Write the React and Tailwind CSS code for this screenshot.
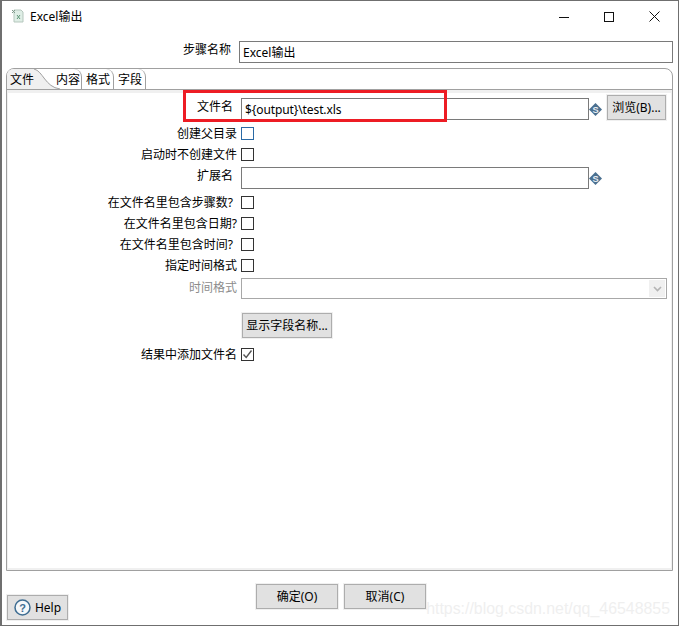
import React from "react";

const DollarIcon = () => (
  <svg width="13" height="13" viewBox="0 0 14 14" className="shrink-0">
    <polygon points="7,0 14,7 7,14 0,7" fill="#4b7090" />
    <text x="7" y="10.5" textAnchor="middle" fontSize="10" fontWeight="700" fill="#e8eef3" fontFamily="Liberation Sans, sans-serif">S</text>
  </svg>
);

const CheckBox = ({ checked, blue }) => (
  <div className={`w-[13px] h-[13px] border bg-white flex items-center justify-center ${blue ? "border-[#2a6aa5]" : "border-[#333333]"}`}>
    {checked && (
      <svg width="11" height="11" viewBox="0 0 11 11" fill="none" stroke="#555555" strokeWidth="1.4">
        <path d="M1.5 5.5 L4.2 8.5 L9.5 1.5" />
      </svg>
    )}
  </div>
);

const Button = ({ children, className = "" }) => (
  <button className={`bg-[#e1e1e1] border border-[#adadad] outline outline-1 outline-[#f0f0f0] text-[12px] text-black flex items-center justify-center whitespace-nowrap ${className}`}>
    {children}
  </button>
);

const Row = ({ label, pr = "pr-[4px]", gray, up = "", className = "", children }) => (
  <div className={`flex items-center ${className}`}>
    <div className={`w-[231px] shrink-0 text-right ${pr} ${up} ${gray ? "text-[#8c8c8c]" : "text-black"}`}>{label}</div>
    {children}
  </div>
);

const Tab = ({ children, className = "" }) => (
  <div className={`h-[20px] pt-[1px] flex items-center border-r border-[#a0a0a0] rounded-tr-[8px] whitespace-nowrap relative ${className}`}>
    {children}
  </div>
);

export default function App() {
  return (
    <div className="w-[679px] h-[627px] bg-white overflow-hidden relative text-[12px] text-black [font-family:'Noto_Sans','Noto_Sans_CJK_SC',sans-serif]">
      <div className="w-[679px] h-[626px] border border-[#6f6f6f] border-l-2 flex flex-col">
        {/* title bar */}
        <div className="h-[31px] shrink-0 flex items-center pl-[9px]">
          <svg width="14" height="14" viewBox="0 0 14 14" className="shrink-0 -mt-[1px]">
            <path d="M3 1 H10 L12 3 V13 H3 Z" fill="#dfeee6" stroke="#b5c7bd" />
            <path d="M1 1 L4 4 M4 1 L1 4" stroke="#7f9a8b" />
            <path d="M6 6 L9 10 M9 6 L6 10" stroke="#5f9678" />
          </svg>
          <span className="ml-[5px]">Excel输出</span>
          <div className="ml-auto flex items-center pr-[18px] gap-[35px]">
            <svg width="10" height="10" viewBox="0 0 10 10" className="mt-[1px]"><path d="M0 5.5 H10" stroke="#111" /></svg>
            <svg width="10" height="10" viewBox="0 0 10 10"><rect x="0.5" y="0.5" width="9" height="9" fill="none" stroke="#111" /></svg>
            <svg width="11" height="11" viewBox="0 0 11 11"><path d="M0.5 0.5 L10.5 10.5 M10.5 0.5 L0.5 10.5" stroke="#111" /></svg>
          </div>
        </div>

        {/* step name */}
        <div className="flex items-center h-[22px] mt-[9px] shrink-0">
          <div className="w-[229px] text-right -mt-[5px]">步骤名称</div>
          <div className="ml-[8px] w-[434px] h-[22px] border border-[#7a7a7a] flex items-center pl-[3px] pt-[1px]">Excel输出</div>
        </div>

        {/* tab folder */}
        <div className="ml-[4px] mt-[5px] w-[667px] h-[503px] border border-[#a0a0a0] rounded-t-[8px] flex flex-col shrink-0">
          <div className="flex h-[20px] shrink-0 relative">
            <div className="w-[49px] h-[20px] relative">
              <svg width="53" height="20" viewBox="0 0 53 20" className="absolute left-0 top-0">
                <path d="M0 20 V7 Q0 0 7 0 H27 C36 2 38 18 53 20 Z" fill="#f0f0f0" />
                <path d="M27 0 C36 2 38 18 53 20" fill="none" stroke="#a0a0a0" />
              </svg>
              <span className="absolute left-[3px] top-[2px]">文件</span>
            </div>
            <Tab className="w-[26px]">内容</Tab>
            <Tab className="w-[32px] pl-[4px]">格式</Tab>
            <Tab className="w-[32px] pl-[4px]">字段</Tab>
          </div>

          <div className="flex-1 bg-[#f0f0f0] p-[3px] pb-[2px] border-t border-[#a0a0a0] [&>div]:h-full">
            <div className="bg-white -mx-[2px] pt-[5px] pl-[2px]">
              {/* file name */}
              <Row label="文件名" pr="pr-[8px]" up="-mt-[4px]">
                <div className="w-[348px] h-[22px] pt-[1px] border border-[#7a7a7a] flex items-center pl-[3px] tracking-[-0.1px]">{"${output}\\test.xls"}</div>
                <DollarIcon />
                <Button className="ml-[5px] w-[59px] h-[25px] -mt-[3px] shrink-0">浏览(B)...</Button>
              </Row>
              <Row label="创建父目录" className="h-[21px] mt-[3px]"><CheckBox blue /></Row>
              <Row label="启动时不创建文件" className="h-[21px]"><CheckBox /></Row>
              <Row label="扩展名" pr="pr-[8px]" up="-mt-[4px]" className="mt-[2px]">
                <div className="w-[348px] h-[22px] border border-[#7a7a7a]" />
                <DollarIcon />
              </Row>
              <Row label="在文件名里包含步骤数?" pr="pr-[8px]" className="h-[21px] mt-[3px]"><CheckBox /></Row>
              <Row label="在文件名里包含日期?" className="h-[21px]"><CheckBox /></Row>
              <Row label="在文件名里包含时间?" pr="pr-[8px]" className="h-[21px]"><CheckBox /></Row>
              <Row label="指定时间格式" className="h-[21px]"><CheckBox /></Row>
              <Row label="时间格式" gray up="-mt-[2px]" className="mt-[2px]">
                <div className="w-[426px] h-[21px] border border-[#a8a8a8] flex items-center justify-end pr-[1px]">
                  <div className="w-[16px] h-[17px] bg-[#f0f0f0] flex items-center justify-center">
                    <svg width="9" height="6" viewBox="0 0 9 6" fill="none" stroke="#b4b4b4" strokeWidth="1.6"><path d="M1 1 L4.5 4.5 L8 1" /></svg>
                  </div>
                </div>
              </Row>
              <div className="pl-[232px] mt-[14px]">
                <Button className="w-[90px] h-[25px]">显示字段名称...</Button>
              </div>
              <Row label="结果中添加文件名" className="h-[21px] mt-[6px]"><CheckBox checked /></Row>
            </div>
          </div>
        </div>

        {/* footer */}
        <div className="flex items-start relative flex-1 pl-[5px]">
          <Button className="w-[61px] h-[25px] mt-[24px] shrink-0">
            <svg width="17" height="17" viewBox="0 0 17 17" className="mr-[4px]">
              <circle cx="8.5" cy="8.5" r="7.5" fill="#f5f8fa" stroke="#3e6d92" strokeWidth="1.5" />
              <text x="8.5" y="12.5" textAnchor="middle" fontSize="11" fontWeight="700" fill="#3e6d92" fontFamily="Liberation Sans, sans-serif">?</text>
            </svg>
            Help
          </Button>
          <Button className="ml-[188px] mt-[13px] w-[82px] h-[25px]">确定(O)</Button>
          <Button className="ml-[6px] mt-[13px] w-[82px] h-[25px]">取消(C)</Button>
        </div>
      </div>

      {/* red annotation over the file name row */}
      <div className="absolute left-[183px] top-[90px] w-[264px] h-[32px] border-[3px] border-[#ed1c24]" />
      {/* blog watermark */}
      <div className="absolute right-[9px] top-[597px] text-[15.9px] text-[#efefef] [font-family:'Liberation_Sans',sans-serif]">https://blog.csdn.net/qq_46548855</div>
    </div>
  );
}
